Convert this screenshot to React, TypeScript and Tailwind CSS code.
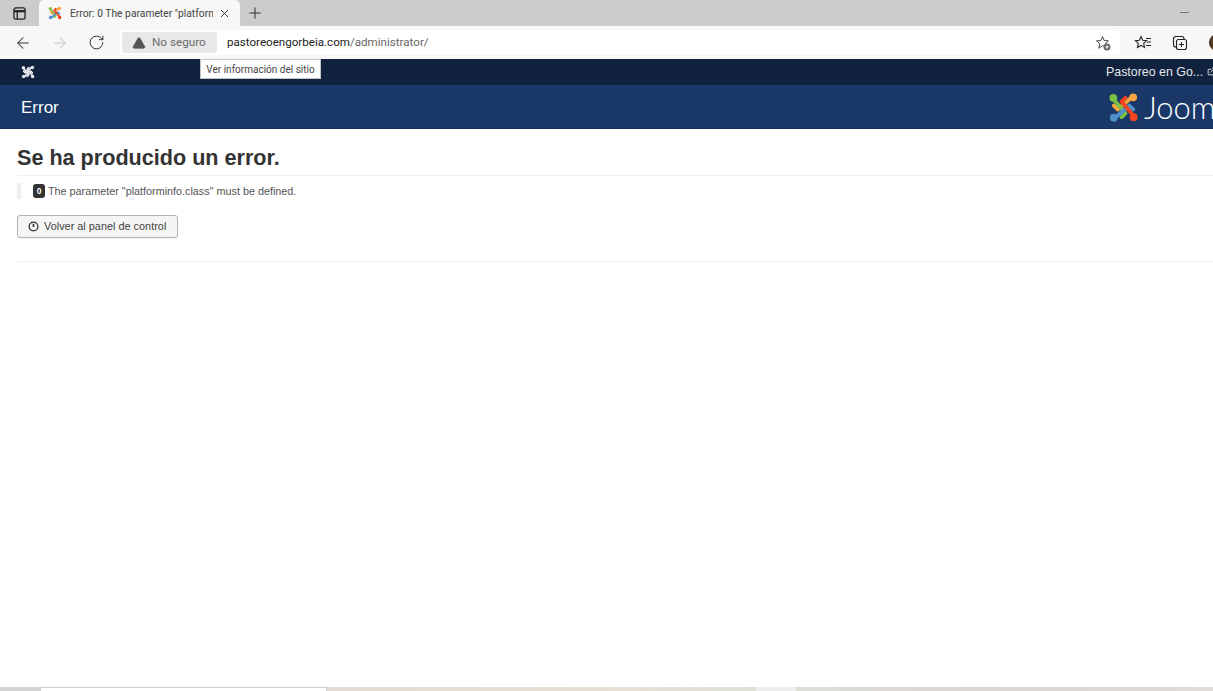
import { ArrowLeft, ArrowRight, ExternalLink, Minus, Plus, RotateCw, TriangleAlert, X } from "lucide-react";

function JoomlaMark({ className, mono }: { className?: string; mono?: boolean }) {
  const green = mono ? "#e6e8ec" : "#7ac143";
  const orange = mono ? "#e6e8ec" : "#f9a541";
  const red = mono ? "#e6e8ec" : "#f44321";
  const blue = mono ? "#e6e8ec" : "#5091cd";
  return (
    <svg viewBox="0 0 32 32" className={className} fill="none" strokeLinecap="round" strokeLinejoin="round" strokeWidth="4">
      <path d="M24 6 L10 18 L6 14" stroke={orange} />
      <circle cx="26" cy="5.5" r="4" fill={orange} />
      <path d="M6 8 L18 22 L14 26" stroke={green} />
      <circle cx="5.5" cy="6" r="4" fill={green} />
      <path d="M8 26 L22 14 L26 18" stroke={blue} />
      <circle cx="6" cy="26.5" r="4" fill={blue} />
      <path d="M26 24 L14 10 L18 6" stroke={red} />
      <circle cx="26.5" cy="26" r="4" fill={red} />
    </svg>
  );
}

function BrowserChrome() {
  return (
    <div className="font-['Roboto',sans-serif]">
      <div className="flex h-[26px] items-end bg-[#cccccc]">
        <div className="flex h-[26px] w-[39px] items-center justify-center">
          <svg viewBox="0 0 14 14" className="h-[13px] w-[13px]" fill="none" stroke="#222222" strokeWidth="1.4">
            <rect x="1" y="1" width="12" height="12" rx="2" />
            <path d="M1 4.5 H13" strokeWidth="2.4" />
            <path d="M4.6 4.5 V13" />
          </svg>
        </div>
        <div className="flex h-[26px] w-[201px] items-center rounded-t-[5px] bg-[#f7f7f7] pl-[9px] pr-[8px]">
          <JoomlaMark className="h-[14px] w-[14px] shrink-0" />
          <span className="ml-[8px] w-[143px] overflow-hidden whitespace-nowrap pt-px text-[10.3px] text-[#444444]">
            Error: 0 The parameter "platform
          </span>
          <X className="ml-[5px] h-[13px] w-[13px] shrink-0 text-[#222222]" strokeWidth={1.6} />
        </div>
        <div className="flex h-[26px] w-[29px] items-center justify-center">
          <Plus className="h-[18px] w-[18px] text-[#333333]" strokeWidth={1.4} />
        </div>
        <div className="flex-1" />
        <div className="flex h-[26px] w-[57px] items-start pl-[22px] pt-[5px]">
          <Minus className="h-[15px] w-[13px] text-[#555555]" strokeWidth={1.4} />
        </div>
      </div>
      <div className="flex h-[33px] items-center bg-[#f7f7f7]">
        <div className="flex w-[120px] items-center pl-[14px]">
          <ArrowLeft className="h-[18px] w-[18px] text-[#333333]" strokeWidth={1.4} />
          <ArrowRight className="ml-[19px] h-[18px] w-[18px] text-[#c4c4c4]" strokeWidth={1.4} />
          <RotateCw className="ml-[19px] h-[17px] w-[17px] text-[#333333]" strokeWidth={1.4} />
        </div>
        <div className="flex h-[25px] w-[1000px] items-center rounded-[4px] bg-white">
          <div className="ml-[2px] flex h-[21px] w-[95px] items-center rounded-[2px] bg-[#e8e8e8] pl-[10px] text-[11.7px] text-[#6b6b6b]">
            <TriangleAlert className="h-[14px] w-[14px] fill-[#555555] text-[#555555]" strokeWidth={1.2} />
            <span className="ml-[6px] pt-px">No seguro</span>
          </div>
          <span className="ml-[10px] pt-px text-[11.6px] text-[#222222]">
            pastoreoengorbeia.com<span className="text-[#666666]">/administrator/</span>
          </span>
          <div className="flex-1" />
          <svg viewBox="0 0 16 16" className="mr-[9px] h-[16px] w-[16px]" fill="none" stroke="#444444" strokeWidth="1">
            <path d="M7.5 1.5 L9.2 5.5 L13.5 5.9 L10.2 8.7 L11 12 L7.5 10.6 L3.8 13.3 L4.8 8.7 L1.5 5.9 L5.8 5.5 Z" />
            <circle cx="12" cy="12" r="3.5" fill="#666666" stroke="none" />
            <path d="M10.4 12 H13.6 M12 10.4 V13.6" stroke="#ffffff" />
          </svg>
        </div>
        <div className="flex flex-1 items-center overflow-hidden pl-[14px]">
          <svg viewBox="0 0 18 16" className="h-[16px] w-[18px] shrink-0" fill="none" stroke="#222222" strokeWidth="1.1">
            <path d="M7 1.5 L8.7 5.3 L12.6 5.7 L9.7 8.4 L10.5 12.5 L7 10.4 L3.4 12.5 L4.3 8.4 L1.4 5.7 L5.3 5.3 Z" />
            <path d="M12 3.5 H17 M13 7 H17 M12 10.5 H17" />
          </svg>
          <svg viewBox="0 0 16 16" className="ml-[20px] h-[16px] w-[16px] shrink-0" fill="none" stroke="#222222" strokeWidth="1.1">
            <path d="M4 12 C2 12 1.5 11 1.5 10 V4 C1.5 2.5 2.5 1.5 4 1.5 H10 C11 1.5 12 2 12 4" />
            <rect x="4.5" y="4.5" width="10" height="10" rx="2" />
            <path d="M9.5 7 V12 M7 9.5 H12" />
          </svg>
          <div className="ml-[21px] h-[17px] w-[17px] shrink-0 rounded-full bg-[linear-gradient(90deg,#3a2413,#d9b48f)]" />
        </div>
      </div>
    </div>
  );
}

export default function App() {
  return (
    <div className="relative flex h-[691px] w-[1213px] flex-col overflow-hidden bg-white font-['Liberation_Sans',Arial,sans-serif]">
      <BrowserChrome />

      {/* site info tooltip */}
      <div className="absolute left-[200px] top-[59px] z-10 flex h-[20px] w-[121px] items-center justify-center border border-[#c4c4c4] bg-white pt-px font-['Roboto',sans-serif] text-[10px] text-[#444444]">
        Ver información del sitio
      </div>

      <div className="flex h-[26px] items-center justify-between bg-[#10223e] text-[#e6e8ec]">
        <JoomlaMark mono className="ml-[21px] h-[14px] w-[14px]" />
        <div className="flex w-[107px] items-center overflow-hidden whitespace-nowrap">
          <span className="text-[12.4px]">Pastoreo en Go...</span>
          <ExternalLink className="ml-[4px] h-[9px] w-[9px] shrink-0" strokeWidth={2.4} />
        </div>
      </div>

      <div className="flex h-[44px] items-center justify-between overflow-hidden bg-[#1a3867] shadow-[inset_0_-1px_0_#16305a]">
        <span className="ml-[21px] pt-px text-[17px] text-white">Error</span>
        <div className="flex w-[105px] shrink-0 items-center overflow-hidden">
          <JoomlaMark className="h-[31px] w-[31px] shrink-0" />
          <span className="ml-[5px] font-['Lato',sans-serif] text-[31px] leading-none font-light text-white">
            Joom
          </span>
        </div>
      </div>

      <main className="flex-1 pl-[17px]">
        <h1 className="mt-[16px] text-[21.6px] leading-[26px] font-bold text-[#333333]">Se ha producido un error.</h1>
        <div className="mt-[4px] border-t border-[#eeeeee]" />
        <div className="mt-[7px] flex h-[16px] items-center border-l-[4px] border-[#eeeeee] pl-[12px]">
          <span className="flex h-[14px] w-[12px] items-center justify-center rounded-[3px] bg-[#333333] text-[8.5px] font-bold text-white">
            0
          </span>
          <span className="ml-[3px] text-[10.8px] text-[#555555]">The parameter "platforminfo.class" must be defined.</span>
        </div>
        <button
          className="mt-[16px] flex h-[23px] w-[161px] items-center rounded-[3px] border border-[#b3b3b3] bg-[#f5f5f5] pl-[10px] text-[#333333] shadow-[0_1px_2px_rgba(0,0,0,0.05)]"
          type="button"
        >
          <svg viewBox="0 0 12 12" className="h-[11px] w-[11px]" fill="none" stroke="#333333" strokeWidth="1.4">
            <circle cx="6" cy="6" r="4.8" />
            <path d="M6 3 V6.5" strokeWidth="1.8" />
          </svg>
          <span className="ml-[5px] text-[10.9px] text-[#444444]">Volver al panel de control</span>
        </button>
        <div className="mt-[23px] border-t border-[#eeeeee]" />
      </main>

      <div className="flex h-[4px] bg-[linear-gradient(90deg,#dcd8d2,#e8dfd2_50%,#e0e0d8_60%,#dad6d4_80%,#e0dad8)]">
        <div className="h-[4px] w-[41px] bg-[#d4d4d4]" />
        <div className="h-[4px] w-[286px] border-t border-r border-[#cfcfcf] bg-white" />
        <div className="ml-[429px] h-[4px] w-[40px] bg-[#eeeeee]" />
      </div>
    </div>
  );
}
